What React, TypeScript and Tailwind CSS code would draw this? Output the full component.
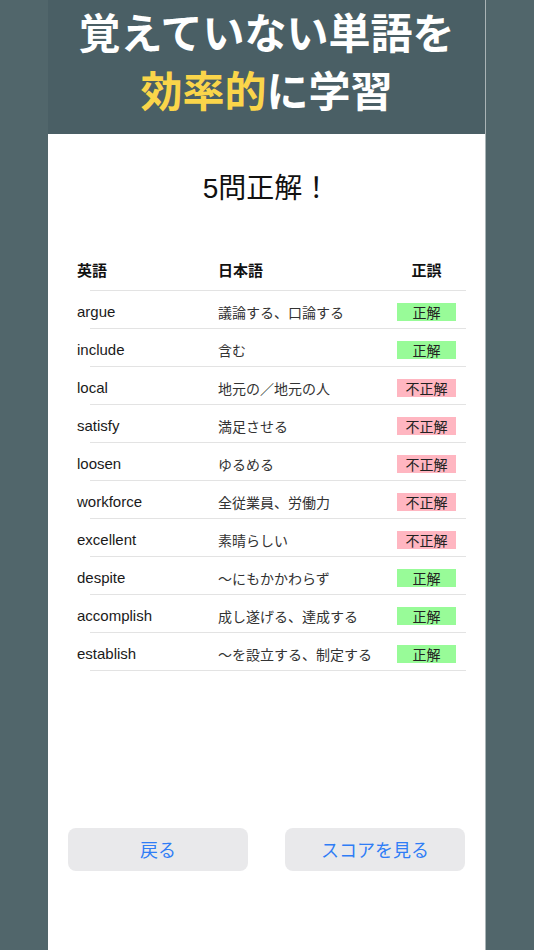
import React from "react";

const rows: { en: string; ja: string; ok: boolean }[] = [
  { en: "argue", ja: "議論する、口論する", ok: true },
  { en: "include", ja: "含む", ok: true },
  { en: "local", ja: "地元の／地元の人", ok: false },
  { en: "satisfy", ja: "満足させる", ok: false },
  { en: "loosen", ja: "ゆるめる", ok: false },
  { en: "workforce", ja: "全従業員、労働力", ok: false },
  { en: "excellent", ja: "素晴らしい", ok: false },
  { en: "despite", ja: "〜にもかかわらず", ok: true },
  { en: "accomplish", ja: "成し遂げる、達成する", ok: true },
  { en: "establish", ja: "〜を設立する、制定する", ok: true },
];

const font = {
  fontFamily: '"Noto Sans CJK JP", "Noto Sans", sans-serif',
};
const latin = {
  fontFamily: '"Liberation Sans", "Noto Sans CJK JP", sans-serif',
};

export default function App() {
  return (
    <div className="w-[534px] h-[950px] bg-[#51666b] overflow-hidden" style={font}>
      <div className="ml-[48px] w-[438px] h-[950px] flex flex-col border-r border-[#aab4b6]">
        <div className="h-[134px] bg-[#4a5f65] flex flex-col items-center pt-[2px] text-[42px] font-bold leading-[58px] text-white">
          <div>覚えていない単語を</div>
          <div>
            <span className="text-[#fad54a]">効率的</span>に学習
          </div>
        </div>
        <div className="flex-1 bg-white flex flex-col">
          <div className="pt-[34px] h-[70px] text-center text-[28px] leading-[36px] text-[#111]">
            <span style={latin}>5</span>問正解！
          </div>
          <div className="mt-[47px] pl-[29px] pr-[19px]">
            <div className="flex items-center h-[39px] text-[15px] font-bold text-[#111]">
              <div className="w-[141px]">英語</div>
              <div className="flex-1">日本語</div>
              <div className="w-[59px] mr-[10px] text-center">正誤</div>
            </div>
            <div className="ml-[13px] h-px bg-[#e3e3e3]" />
            {rows.map((r) => (
              <div key={r.en}>
                <div className="flex items-center h-[37px] pt-[5px] text-[15px]">
                  <div className="w-[141px] text-[#1a1a1a]" style={latin}>
                    {r.en}
                  </div>
                  <div className="flex-1 text-[14px] text-[#333]">{r.ja}</div>
                  <div
                    className={
                      "w-[59px] mr-[10px] h-[18px] flex items-center justify-center text-[14px] leading-[18px] text-[#222] " +
                      (r.ok ? "bg-[#98fb98]" : "bg-[#ffb6c1]")
                    }
                  >
                    {r.ok ? "正解" : "不正解"}
                  </div>
                </div>
                <div className="ml-[13px] h-px bg-[#e3e3e3]" />
              </div>
            ))}
          </div>
          <div className="mt-[157px] px-[20px] flex justify-between">
            <button className="w-[180px] h-[43px] rounded-lg bg-[#e9e9eb] text-[18px] text-[#2f7df6]">
              戻る
            </button>
            <button className="w-[180px] h-[43px] rounded-lg bg-[#e9e9eb] text-[18px] text-[#2f7df6]">
              スコアを見る
            </button>
          </div>
        </div>
      </div>
    </div>
  );
}
